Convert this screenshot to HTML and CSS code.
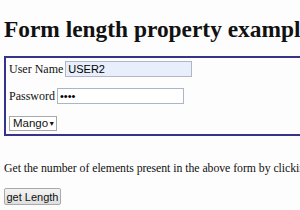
FILE: index.html
```html
<!DOCTYPE html>
<html>
<head>
<meta charset="utf-8">
<link rel="stylesheet" href="styles.css">
</head>
<body>
<h1 class="title">Form length property example</h1>
<form class="box">
  <div class="row"><span class="lbl">User Name</span><input class="field filled" type="text" value="USER2"></div>
  <div class="row"><span class="lbl">Password</span><input class="field pass" type="password" value="pass"></div>
  <div class="row"><span class="sel">Mango <span class="arrow">&#9660;</span></span></div>
</form>
<p class="desc">Get the number of elements present in the above form by clicking the button below.</p>
<button class="btn" type="button">get Length</button>
</body>
</html>
```
FILE: styles.css
```css
html, body { margin: 0; padding: 0; background: #fdfdfd; overflow: hidden; }
body { width: 300px; height: 210px; font-family: "Liberation Serif", serif; color: #111; padding: 0 0 0 4px; box-sizing: border-box; }
.title { margin: 0; padding-top: 16px; font-size: 23.4px; line-height: 26px; font-weight: bold; white-space: nowrap; }
.box { margin-top: 14px; width: 320px; border: 2px solid #35338a; border-right: none; padding: 3px 4px 3px 3px; box-sizing: border-box; display: flex; flex-direction: column; gap: 11px; }
.row { display: flex; align-items: center; height: 16px; font-size: 12px; }
.lbl { margin-right: 2px; }
.field { width: 127px; height: 16px; box-sizing: border-box; font-family: "Liberation Sans", sans-serif; font-size: 11px; padding: 0 2px; border: 1px solid #a9b6c8; outline: none; margin: 0; }
.filled { background: #e8eefb; border-color: #b0b6c4; }
.pass { background: #fff; }
.sel { display: inline-flex; align-items: center; justify-content: space-between; height: 15px; width: 48px; box-sizing: border-box; border: 1px solid #a8a8a8; background: #fff; font-family: "Liberation Sans", sans-serif; font-size: 11.5px; padding: 0 4px 0 3px; }
.arrow { font-size: 7px; }
.desc { margin: 25px 0 0 0; font-size: 11.8px; white-space: nowrap; letter-spacing: -0.05px; }
.btn { margin-top: 12px; height: 17px; width: 57px; padding: 0; font-family: "Liberation Sans", sans-serif; font-size: 11px; border: 1px solid #aaa; border-radius: 2px; background: linear-gradient(#f4f4f4, #dedede); color: #111; }
```
